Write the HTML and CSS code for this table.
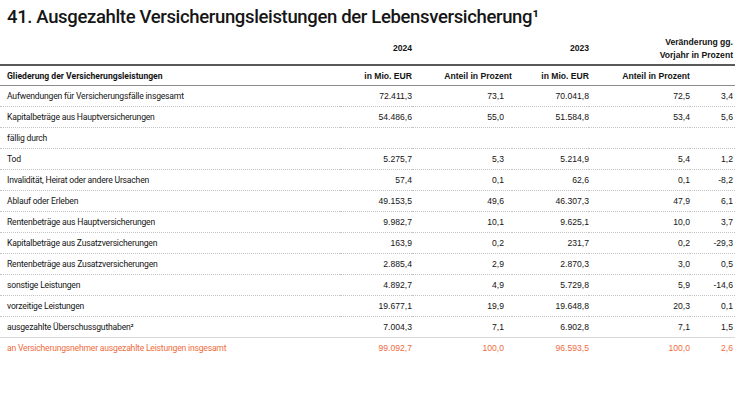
FILE: index.html
```html
<!DOCTYPE html>
<html lang="de">
<head>
<meta charset="utf-8">
<title>Ausgezahlte Versicherungsleistungen</title>
<link rel="stylesheet" href="styles.css">
</head>
<body>
<h1 class="title">41. Ausgezahlte Versicherungsleistungen der Lebensversicherung¹</h1>
<table class="data">
  <colgroup>
    <col class="c-label"><col class="c-mio1"><col class="c-ant1"><col class="c-mio2"><col class="c-ant2"><col class="c-chg">
  </colgroup>
  <thead>
    <tr class="years">
      <th></th>
      <th class="num">2024</th>
      <th></th>
      <th class="num">2023</th>
      <th class="num chg-head" colspan="2">Veränderung gg.<br>Vorjahr in Prozent</th>
    </tr>
    <tr class="sub">
      <th class="label">Gliederung der Versicherungsleistungen</th>
      <th class="num">in Mio. EUR</th>
      <th class="num">Anteil in Prozent</th>
      <th class="num">in Mio. EUR</th>
      <th class="num">Anteil in Prozent</th>
      <th class="num last"></th>
    </tr>
  </thead>
  <tbody>
    <tr><td class="label">Aufwendungen für Versicherungsfälle insgesamt</td><td class="num">72.411,3</td><td class="num ant">73,1</td><td class="num">70.041,8</td><td class="num">72,5</td><td class="num last">3,4</td></tr>
    <tr><td class="label">Kapitalbeträge aus Hauptversicherungen</td><td class="num">54.486,6</td><td class="num ant">55,0</td><td class="num">51.584,8</td><td class="num">53,4</td><td class="num last">5,6</td></tr>
    <tr><td class="label">fällig durch</td><td class="num"></td><td class="num ant"></td><td class="num"></td><td class="num"></td><td class="num last"></td></tr>
    <tr><td class="label">Tod</td><td class="num">5.275,7</td><td class="num ant">5,3</td><td class="num">5.214,9</td><td class="num">5,4</td><td class="num last">1,2</td></tr>
    <tr><td class="label">Invalidität, Heirat oder andere Ursachen</td><td class="num">57,4</td><td class="num ant">0,1</td><td class="num">62,6</td><td class="num">0,1</td><td class="num last">-8,2</td></tr>
    <tr><td class="label">Ablauf oder Erleben</td><td class="num">49.153,5</td><td class="num ant">49,6</td><td class="num">46.307,3</td><td class="num">47,9</td><td class="num last">6,1</td></tr>
    <tr><td class="label">Rentenbeträge aus Hauptversicherungen</td><td class="num">9.982,7</td><td class="num ant">10,1</td><td class="num">9.625,1</td><td class="num">10,0</td><td class="num last">3,7</td></tr>
    <tr><td class="label">Kapitalbeträge aus Zusatzversicherungen</td><td class="num">163,9</td><td class="num ant">0,2</td><td class="num">231,7</td><td class="num">0,2</td><td class="num last">-29,3</td></tr>
    <tr><td class="label">Rentenbeträge aus Zusatzversicherungen</td><td class="num">2.885,4</td><td class="num ant">2,9</td><td class="num">2.870,3</td><td class="num">3,0</td><td class="num last">0,5</td></tr>
    <tr><td class="label">sonstige Leistungen</td><td class="num">4.892,7</td><td class="num ant">4,9</td><td class="num">5.729,8</td><td class="num">5,9</td><td class="num last">-14,6</td></tr>
    <tr><td class="label">vorzeitige Leistungen</td><td class="num">19.677,1</td><td class="num ant">19,9</td><td class="num">19.648,8</td><td class="num">20,3</td><td class="num last">0,1</td></tr>
    <tr class="pre-total"><td class="label">ausgezahlte Überschussguthaben²</td><td class="num">7.004,3</td><td class="num ant">7,1</td><td class="num">6.902,8</td><td class="num">7,1</td><td class="num last">1,5</td></tr>
    <tr class="total"><td class="label">an Versicherungsnehmer ausgezahlte Leistungen insgesamt</td><td class="num">99.092,7</td><td class="num ant">100,0</td><td class="num">96.593,5</td><td class="num">100,0</td><td class="num last">2,6</td></tr>
  </tbody>
</table>
</body>
</html>
```

FILE: styles.css
```css
html, body {
  margin: 0;
  padding: 0;
  background: #ffffff;
}

body {
  font-family: "Liberation Sans", Arial, sans-serif;
  color: #141414;
  width: 735px;
}

.title {
  margin: 0;
  padding: 6px 0 0 7px;
  height: 27px;
  font-family: Roboto, "Liberation Sans", sans-serif;
  font-size: 18.5px;
  line-height: 22px;
  font-weight: 500;
  letter-spacing: -0.35px;
  color: #161616;
}

.data {
  width: 735px;
  border-collapse: collapse;
  table-layout: fixed;
  font-size: 8.6px;
}

.c-label { width: 340px; }
.c-mio1 { width: 72px; }
.c-ant1 { width: 100px; }
.c-mio2 { width: 77px; }
.c-ant2 { width: 101px; }
.c-chg { width: 45px; }

.data th,
.data td {
  padding: 0;
  white-space: nowrap;
}

.num {
  text-align: right;
  padding-right: 1px;
}

.label {
  text-align: left;
  padding-left: 7px !important;
  font-family: Roboto, "Liberation Sans", sans-serif;
  letter-spacing: -0.2px;
}

.data th {
  font-weight: 700;
}

.data th.label {
  letter-spacing: 0;
}

.years th {
  height: 31px;
  vertical-align: middle;
  line-height: 13px;
  border-bottom: 2px solid #5a5a5a;
}

.years .chg-head {
  padding-right: 2px;
}

.sub th {
  height: 19px;
  vertical-align: middle;
  border-bottom: 1.5px solid #8c8c8c;
}

.data td {
  height: 20px;
  vertical-align: middle;
  border-bottom: 1px dotted #c4c4c4;
}

.data td.ant {
  padding-right: 8px;
}

.data .last {
  padding-right: 2px;
}

.data tr.pre-total td {
  border-bottom: 1px solid #d8d8d8;
}

.data tr.total td {
  border-bottom: none;
  color: #ef6b3c;
}
```
